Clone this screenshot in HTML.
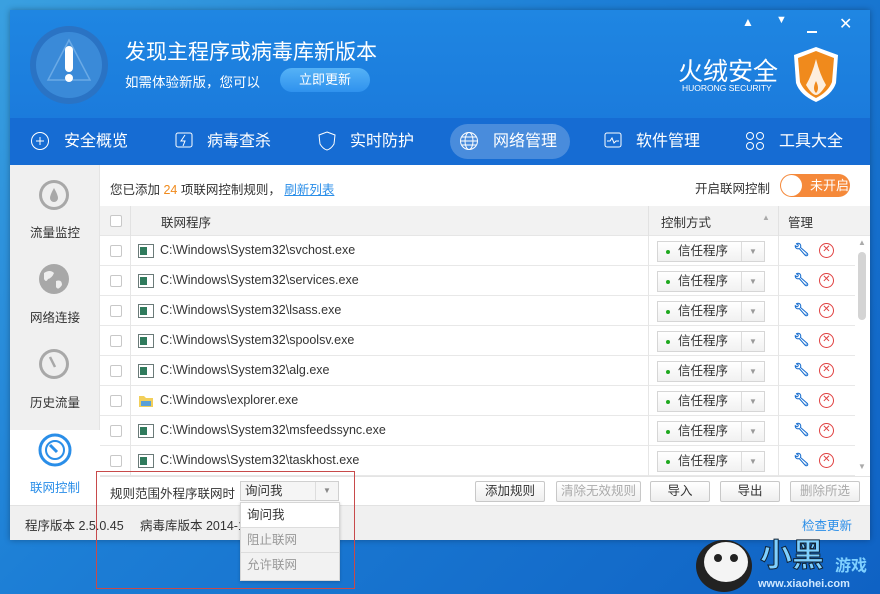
<!DOCTYPE html>
<html><head><meta charset="utf-8">
<style>
*{margin:0;padding:0;box-sizing:border-box}
body{width:880px;height:594px;overflow:hidden;position:relative;font-family:"Liberation Sans","Noto Sans CJK SC",sans-serif;background:linear-gradient(135deg,#3aa0e0 0%,#1d7fd6 40%,#0f62c4 100%);}
.abs{position:absolute}
.win{position:absolute;left:10px;top:10px;width:860px;height:530px;background:#fff;box-shadow:0 0 6px rgba(0,0,0,.3)}
.hdr{position:absolute;left:0;top:0;width:860px;height:108px;background:linear-gradient(180deg,#1f86e2,#1b7bdc)}
.nav{position:absolute;left:0;top:108px;width:860px;height:47px;background:#166cd3}
.nav .it{position:absolute;top:0;height:47px;line-height:47px;color:#fff;font-size:16px}
.nav svg{position:absolute;top:13px}
.side{position:absolute;left:0;top:155px;width:90px;height:340px;background:#f0f0f0;border-right:1px solid #e4e4e4}
.side .s{position:absolute;left:0;width:90px;text-align:center;font-size:12.5px;color:#333}
.t{font-size:12.5px;color:#333}
.row{position:absolute;left:90px;width:755px;height:30px;border-bottom:1px solid #e8e8e8;background:#fff}
.cb{position:absolute;left:10px;top:9px;width:12px;height:12px;border:1px solid #c8c8c8;border-radius:2px;background:#fff}
.vl{position:absolute;top:0;width:1px;height:30px;background:#e6e6e6}
.sel{position:absolute;left:557px;top:5px;width:108px;height:21px;border:1px solid #d6d6d6;background:linear-gradient(#fff,#f1f1f1);font-size:12.5px;color:#333;line-height:19px}
.btn{position:absolute;top:482px;height:21px;border:1px solid #c8c8c8;border-radius:2px;background:linear-gradient(#fff,#eee);font-size:12.5px;text-align:center;line-height:19px;color:#333}
</style></head><body>
<div class="win">
 <div class="hdr">
  <svg class="abs" style="left:18px;top:14px" width="82" height="82" viewBox="0 0 82 82">
   <circle cx="41" cy="41" r="39" fill="#2a73c4"/><circle cx="41" cy="41" r="33" fill="#3a8ad8"/>
   <path d="M41 16 L62 56 L20 56Z" fill="none" stroke="#6aaae6" stroke-width="1.5"/>
   <rect x="37" y="22" width="8" height="26" rx="4" fill="#fff"/><circle cx="41" cy="54" r="4" fill="#fff"/>
  </svg>
  <div class="abs" style="left:115px;top:26px;color:#fff;font-size:21px">发现主程序或病毒库新版本</div>
  <div class="abs" style="left:115px;top:61px;color:#fff;font-size:13.5px">如需体验新版，您可以</div>
  <div class="abs" style="left:270px;top:58px;width:90px;height:24px;border-radius:12px;background:linear-gradient(#55b2f6,#2f92ee);color:#fff;font-size:13px;text-align:center;line-height:24px">立即更新</div>
  <div class="abs" style="left:732px;top:5px;color:#fff;font-size:12px">&#9650;</div>
  <div class="abs" style="left:766px;top:4px;color:#fff;font-size:11px">&#9660;</div>
  <div class="abs" style="left:797px;top:21px;width:10px;height:2px;background:#fff"></div>
  <div class="abs" style="left:829px;top:4px;color:#fff;font-size:16px">✕</div>
  <div class="abs" style="left:668px;top:42px;color:#fff;font-size:25px">火绒安全</div>
  <div class="abs" style="left:672px;top:73px;color:#fff;font-size:8.5px">HUORONG SECURITY</div>
  <svg class="abs" style="left:782px;top:35px" width="48" height="58" viewBox="0 0 48 58">
   <path d="M24 2 L46 10 L44 38 Q40 50 24 57 Q8 50 4 38 L2 10Z" fill="#fff"/>
   <path d="M24 6 L42 13 L40 37 Q36 47 24 53 Q12 47 8 37 L6 13Z" fill="#f08a1c"/>
   <path d="M24 14 Q20 30 14 40 Q20 50 24 50 Q28 50 34 40 Q28 30 24 14Z" fill="#fff" opacity=".85"/>
   <path d="M24 36 Q20 44 24 48 Q28 44 24 36Z" fill="#f08a1c"/>
  </svg>
 </div>
 <div class="nav">
  <svg style="left:20px" width="20" height="20"><circle cx="10" cy="10" r="8.5" fill="none" stroke="#fff"/><path d="M10 6v8M6 10h8" stroke="#fff"/></svg>
  <div class="it" style="left:54px">安全概览</div>
  <svg style="left:164px" width="20" height="20"><rect x="2" y="2" width="16" height="14" rx="2" fill="none" stroke="#fff"/><path d="M11 4 7 10h4l-2 5" fill="none" stroke="#fff"/></svg>
  <div class="it" style="left:197px">病毒查杀</div>
  <svg style="left:307px" width="20" height="20"><path d="M10 1 18 4 17 13Q14 18 10 19 6 18 3 13L2 4Z" fill="none" stroke="#fff"/></svg>
  <div class="it" style="left:340px">实时防护</div>
  <div class="abs" style="left:440px;top:6px;width:120px;height:35px;border-radius:18px;background:rgba(255,255,255,.22)"></div>
  <svg style="left:449px" width="20" height="20"><circle cx="10" cy="10" r="8.5" fill="none" stroke="#fff"/><ellipse cx="10" cy="10" rx="4" ry="8.5" fill="none" stroke="#fff"/><path d="M2 10h16M3 6h14M3 14h14" stroke="#fff"/></svg>
  <div class="it" style="left:483px">网络管理</div>
  <svg style="left:593px" width="20" height="20"><rect x="2" y="2" width="16" height="14" rx="2" fill="none" stroke="#fff"/><path d="M4 10h3l2-3 2 5 2-2h3" fill="none" stroke="#fff"/></svg>
  <div class="it" style="left:626px">软件管理</div>
  <svg style="left:735px" width="20" height="20"><circle cx="5" cy="5" r="3.5" fill="none" stroke="#fff"/><circle cx="15" cy="5" r="3.5" fill="none" stroke="#fff"/><circle cx="5" cy="15" r="3.5" fill="none" stroke="#fff"/><circle cx="15" cy="15" r="3.5" fill="none" stroke="#fff"/></svg>
  <div class="it" style="left:769px">工具大全</div>
 </div>
 <div class="side">
  <svg class="abs" style="left:28px;top:14px" width="32" height="32"><circle cx="16" cy="16" r="15" fill="#a8a8a8"/><circle cx="16" cy="16" r="12" fill="#eee"/><path d="M16 9 Q12 16 12 19 A4 4 0 0 0 20 19 Q20 16 16 9Z" fill="#a8a8a8"/></svg>
  <div class="s" style="top:57px">流量监控</div>
  <svg class="abs" style="left:28px;top:98px" width="32" height="32"><circle cx="16" cy="16" r="15" fill="#a8a8a8"/><path d="M6 10 Q12 6 16 10 Q14 15 10 16 Q8 20 6 16Z M18 18 Q24 16 24 22 Q20 28 18 24Z" fill="#eee"/></svg>
  <div class="s" style="top:142px">网络连接</div>
  <svg class="abs" style="left:28px;top:183px" width="32" height="32"><circle cx="16" cy="16" r="15" fill="#a8a8a8"/><circle cx="16" cy="16" r="12" fill="#eee"/><path d="M12 9 17 19" stroke="#a8a8a8" stroke-width="2.5"/></svg>
  <div class="s" style="top:227px">历史流量</div>
  <div class="abs" style="left:0;top:265px;width:91px;height:75px;background:#fff"></div>
  <svg class="abs" style="left:28px;top:268px" width="34" height="34"><circle cx="17" cy="17" r="15" fill="none" stroke="#2a8ee8" stroke-width="3"/><circle cx="17" cy="17" r="9" fill="none" stroke="#2a8ee8" stroke-width="2"/><path d="M12 12 19 19" stroke="#2a8ee8" stroke-width="3"/></svg>
  <div class="s" style="top:312px;color:#2a8ee8">联网控制</div>
 </div>
 <div class="abs t" style="left:100px;top:169px">您已添加 <span style="color:#f08a1c">24</span> 项联网控制规则， <span style="color:#2a8ee8;text-decoration:underline">刷新列表</span></div>
 <div class="abs t" style="left:685px;top:168px">开启联网控制</div>
 <div class="abs" style="left:770px;top:164px;width:70px;height:23px;border-radius:12px;background:#f5893a;color:#fff;font-size:13px;line-height:23px;padding-left:30px">未开启</div>
 <div class="abs" style="left:771px;top:165px;width:21px;height:21px;border-radius:50%;background:#fff"></div>
 <div class="abs" style="left:90px;top:196px;width:770px;height:30px;background:#f2f2f2;border-bottom:1px solid #e6e6e6"></div>
 <div class="abs cb" style="left:100px;top:205px"></div>
 <div class="abs" style="left:120px;top:196px;width:1px;height:30px;background:#e2e2e2"></div>
 <div class="abs t" style="left:151px;top:202px">联网程序</div>
 <div class="abs" style="left:638px;top:196px;width:1px;height:30px;background:#e2e2e2"></div>
 <div class="abs t" style="left:651px;top:202px">控制方式</div>
 <div class="abs" style="left:752px;top:203px;font-size:8px;color:#aaa">▲</div>
 <div class="abs" style="left:768px;top:196px;width:1px;height:30px;background:#e2e2e2"></div>
 <div class="abs t" style="left:778px;top:202px">管理</div>
 <div id="rows"></div>
 <div class="abs" style="left:848px;top:228px;font-size:8px;color:#aaa">▲</div>
 <div class="abs" style="left:848px;top:242px;width:8px;height:68px;border-radius:4px;background:#d4d4d4"></div>
 <div class="abs" style="left:848px;top:452px;font-size:8px;color:#aaa">▼</div>
 <div class="abs" style="left:90px;top:466px;width:770px;height:1px;background:#e4e4e4"></div>
 <div class="abs t" style="left:100px;top:473px">规则范围外程序联网时</div>
 <div class="abs" style="left:230px;top:471px;width:99px;height:20px;border:1px solid #d0d0d0;background:#f5f5f5;font-size:12.5px;line-height:18px;padding-left:4px;color:#333">询问我<span style="position:absolute;left:74px;top:0;width:1px;height:18px;background:#ddd"></span><span style="position:absolute;left:82px;top:0;font-size:8px;color:#888">▼</span></div>
 <div class="btn" style="left:465px;width:70px;top:471px">添加规则</div>
 <div class="btn" style="left:546px;width:85px;top:471px;color:#aaa">清除无效规则</div>
 <div class="btn" style="left:640px;width:60px;top:471px">导入</div>
 <div class="btn" style="left:710px;width:60px;top:471px">导出</div>
 <div class="btn" style="left:780px;width:70px;top:471px;color:#aaa">删除所选</div>
 <div class="abs" style="left:0;top:495px;width:860px;height:35px;background:#f0f0f0;border-top:1px solid #e2e2e2"></div>
 <div class="abs t" style="left:15px;top:505px">程序版本 2.5.0.45</div>
 <div class="abs t" style="left:130px;top:505px">病毒库版本 2014-1</div>
 <div class="abs" style="left:792px;top:505px;font-size:12.5px;color:#2a8ee8">检查更新</div>
</div>
<div class="abs" style="left:240px;top:502px;width:100px;height:79px;background:#f2f2f2;border:1px solid #d6d6d6;box-shadow:0 1px 3px rgba(0,0,0,.2)">
 <div style="height:25px;background:#fff;border-bottom:1px solid #ddd;font-size:12.5px;line-height:25px;padding-left:6px;color:#333">询问我</div>
 <div style="height:25px;border-bottom:1px solid #ddd;font-size:12.5px;line-height:25px;padding-left:6px;color:#999">阻止联网</div>
 <div style="height:25px;font-size:12.5px;line-height:25px;padding-left:6px;color:#999">允许联网</div>
</div>
<div class="abs" style="left:96px;top:471px;width:259px;height:118px;border:1px solid #c84a4a"></div>
<svg class="abs" style="left:688px;top:528px" width="72" height="66"><ellipse cx="36" cy="38" rx="28" ry="26" fill="#222"/><ellipse cx="38" cy="34" rx="22" ry="20" fill="#f4f4f4"/><circle cx="30" cy="30" r="4" fill="#222"/><circle cx="46" cy="30" r="4" fill="#222"/></svg>
<div class="abs" style="left:760px;top:530px;color:#7fd0ff;font-size:32px;font-weight:bold;-webkit-text-stroke:1px #123">小黑</div>
<div class="abs" style="left:835px;top:552px;color:#7fd0ff;font-size:16px;font-weight:bold">游戏</div>
<div class="abs" style="left:758px;top:578px;color:#cfe8ff;font-size:11px;font-weight:bold">www.xiaohei.com</div>
<script>
var files=["svchost.exe","services.exe","lsass.exe","spoolsv.exe","alg.exe","explorer.exe","msfeedssync.exe","taskhost.exe"];
var h="";
files.forEach(function(f,i){
 var y=226+i*30; var p=(f=="explorer.exe")?"C:\\Windows\\":"C:\\Windows\\System32\\";
 var icon=(f=="explorer.exe")?'<svg style="position:absolute;left:38px;top:8px" width="16" height="14"><path d="M1 2h5l2 2h7v9H1z" fill="#f2cf5a"/><rect x="3" y="7" width="10" height="5" fill="#5aa0d8"/></svg>':'<svg style="position:absolute;left:38px;top:8px" width="16" height="14"><rect x=".5" y=".5" width="15" height="13" fill="#fff" stroke="#6a7a78"/><rect x="2" y="3" width="7" height="8" fill="#2f7a5c"/></svg>';
 h+='<div class="row" style="top:'+y+'px"><div class="cb"></div><div class="vl" style="left:30px"></div>'+icon+
 '<div class="t" style="position:absolute;left:60px;top:7px">'+p+f+'</div><div class="vl" style="left:548px"></div>'+
 '<div class="sel"><span style="position:absolute;left:8px;top:8px;width:4px;height:4px;border-radius:50%;background:#1ea81e"></span><span style="position:absolute;left:20px">信任程序</span><span style="position:absolute;left:83px;top:0;width:1px;height:19px;background:#ddd"></span><span style="position:absolute;left:91px;font-size:8px;color:#999">▼</span></div>'+
 '<div class="vl" style="left:678px"></div><div style="position:absolute;left:693px;top:6px;color:#1a6fd0;font-size:13px;font-weight:bold">🔧︎</div>'+
 '<div style="position:absolute;left:719px;top:7px;width:15px;height:15px;border:1.5px solid #e04040;border-radius:50%;color:#e04040;font-size:10px;line-height:12px;text-align:center">✕</div></div>';
});
document.getElementById("rows").innerHTML=h;
</script>
</body></html>
